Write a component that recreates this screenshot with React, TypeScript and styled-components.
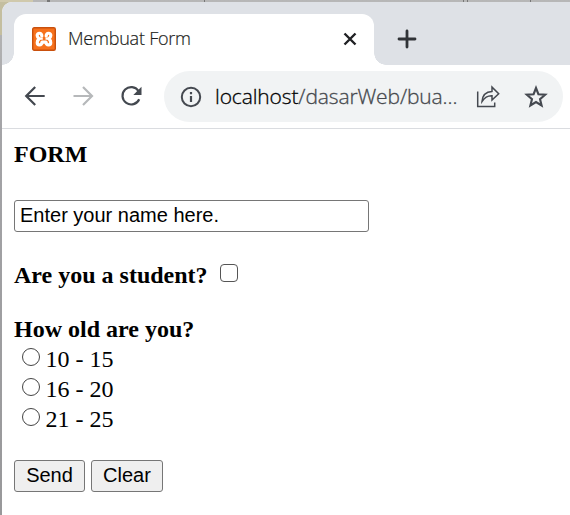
import React from "react";
import styled, { createGlobalStyle } from "styled-components";

const GlobalStyle = createGlobalStyle`
  * { box-sizing: border-box; }
  body { margin: 0; background: #fff; overflow: hidden; }
`;

const Desktop = styled.div`
  width: 570px;
  height: 515px;
  padding: 2px 0 0 2px;
  background:
    linear-gradient(#777, #777) 47px 0 / 3px 2px no-repeat,
    linear-gradient(#777, #777) 204px 0 / 1px 2px no-repeat,
    linear-gradient(#777, #777) 463px 0 / 1px 2px no-repeat,
    linear-gradient(#777, #777) 467px 0 / 1px 2px no-repeat,
    linear-gradient(#777, #777) 530px 0 / 1px 2px no-repeat,
    linear-gradient(#d0c9ac, #d0c9ac) 0 0 / 33px 2px no-repeat,
    linear-gradient(#c4be9f, #c4be9f) 0 0 / 10px 35px no-repeat,
    linear-gradient(to bottom, #b7b7b7, #a4a4a7 25%, #98989a) 0 0 / 100% 100%;
`;

const Window = styled.div`
  height: 513px;
  background: #fff;
  border-top-left-radius: 10px;
  overflow: hidden;
`;

const TabStrip = styled.div`
  height: 63px;
  display: flex;
  align-items: flex-end;
  background: #dee1e6;
`;

const TabFoot = styled.div<{ $side: "left" | "right" }>`
  width: 12px;
  height: 12px;
  background: radial-gradient(
    circle at ${(p) => (p.$side === "left" ? "0 0" : "100% 0")},
    transparent 11.5px,
    #fff 12px
  );
`;

const Tab = styled.div`
  width: 360px;
  height: 51px;
  padding: 0 17px 1px 18px;
  display: flex;
  align-items: center;
  border-radius: 12px 12px 0 0;
  background: #fff;
`;

const TabTitle = styled.span`
  margin: -2px 0 0 12px;
  flex: 1;
  font: 300 18px/24px "Open Sans", sans-serif;
  letter-spacing: -0.22px;
  -webkit-text-stroke: 0.2px #1c1d20;
  color: #1c1d20;
  white-space: nowrap;
`;

const NewTab = styled.div`
  align-self: center;
  margin: 11px 0 0 11px;
  display: flex;
`;

const Toolbar = styled.div`
  height: 64px;
  padding: 6px 7px 7px 22px;
  display: flex;
  align-items: center;
  border-bottom: 1px solid #dadce0;
`;

const NavButtons = styled.div`
  display: flex;
  gap: 24px;
  width: 140px;
`;

const AddressBar = styled.div`
  flex: 1;
  height: 51px;
  padding: 1px 15px 0 15px;
  display: flex;
  align-items: center;
  border-radius: 26px;
  background: #f1f3f4;
`;

const Address = styled.span`
  flex: 1;
  margin: -2px 0 0 12px;
  font: 300 21px/30px "Open Sans", sans-serif;
  letter-spacing: -0.12px;
  -webkit-text-stroke: 0.3px currentColor;
  color: #45484d;
  white-space: nowrap;
`;

const Host = styled.span`
  color: #000;
`;

const Actions = styled.div`
  display: flex;
  gap: 24px;
`;

const Page = styled.form`
  padding: 10px 12px 0;
  font: 24px/30px "Liberation Serif", serif;
  color: #000;
`;

const Line = styled.div<{ $bold?: boolean }>`
  height: 30px;
  display: flex;
  white-space: pre;
  font-weight: ${(p) => (p.$bold ? 700 : 400)};
`;

const NameField = styled.input`
  display: block;
  width: 355px;
  height: 32px;
  margin: 31px 0 28px;
  padding: 0 5px 2px;
  border: 1px solid #767676;
  border-radius: 3px;
  outline: none;
  font: 20px "Liberation Sans", sans-serif;
  color: #000;
`;

const Checkbox = styled.input`
  appearance: none;
  width: 18px;
  height: 18px;
  margin: 4px 0 0 12px;
  border: 1px solid #555;
  border-radius: 4px;
`;

const AgeGroup = styled.div`
  margin-top: 24px;
`;

const Radio = styled.input`
  appearance: none;
  width: 18px;
  height: 18px;
  margin: 4px 5.5px 0 8px;
  border: 1px solid #444;
  border-radius: 50%;
`;

const Buttons = styled.div`
  display: flex;
  gap: 6px;
  margin-top: 26px;
`;

const Button = styled.button<{ $width: number }>`
  width: ${(p) => p.$width}px;
  height: 32px;
  padding: 0 0 2px;
  border: 1px solid #767676;
  border-radius: 3px;
  background: #efefef;
  font: 20px "Liberation Sans", sans-serif;
  color: #000;
`;

const Favicon = () => (
  <svg width="24" height="24" viewBox="0 0 24 24">
    <rect x=".7" y=".7" width="22.6" height="22.6" rx="1.5" fill="#f6711c" stroke="#c9500d" strokeWidth="1.4" />
    <path
      d="M9.8 9C9.7 5.4 5 5.4 5.2 8.6c.1 1.5 1 2.4 2 3.2-2.7 2.2-2.5 6.1.1 6.1 2.1 0 2.7-1.4 2.7-2.8h4c0 1.4.6 2.8 2.7 2.8 2.6 0 2.8-3.9.1-6.1 1-.8 1.9-1.7 2-3.2.2-3.2-4.5-3.2-4.6.4"
      fill="none"
      stroke="#fff"
      strokeWidth="3.2"
      strokeLinejoin="round"
      strokeLinecap="round"
    />
    <path d="M8 11.7h2.8M13.5 11.7h2.8" stroke="#fff" strokeWidth="2.2" />
  </svg>
);

const CloseIcon = () => (
  <svg width="14" height="14" viewBox="0 0 14 14" fill="none" stroke="#202124" strokeWidth="2.4">
    <path d="M1.5 1.5l11 11M12.5 1.5l-11 11" />
  </svg>
);

const PlusIcon = () => (
  <svg width="20" height="20" viewBox="0 0 20 20" fill="none" stroke="#303337" strokeWidth="2.8" strokeLinecap="round">
    <path d="M10 2v16M2 10h16" />
  </svg>
);

const ArrowIcon = ({ forward = false }: { forward?: boolean }) => (
  <svg width="24" height="24" viewBox="0 0 24 24" fill="none" stroke={forward ? "#b6b8ba" : "#444950"} strokeWidth="2.2">
    <path d={forward ? "M1.5 12h18M11 3l9 9-9 9" : "M20.7 12h-18M11.2 3l-9 9 9 9"} />
  </svg>
);

const ReloadIcon = () => (
  <svg width="24" height="24" viewBox="0 0 24 24">
    <path d="M19.2 15.2A8.7 8.7 0 1 1 18.5 7" fill="none" stroke="#444950" strokeWidth="2.2" />
    <path d="M21.5 2.8V11h-8.2Z" fill="#444950" />
  </svg>
);

const InfoIcon = () => (
  <svg width="24" height="24" viewBox="0 0 24 24" fill="none" stroke="#454950" strokeWidth="2">
    <circle cx="12" cy="12" r="9.2" />
    <path d="M12 11v6M12 7v2.2" strokeWidth="2.2" />
  </svg>
);

const ShareIcon = () => (
  <svg width="24" height="24" viewBox="0 0 24 24" fill="none" stroke="#454950" strokeWidth="1.5">
    <path d="M1.7 6.5v15h17v-4" />
    <path d="M6 16.5C6.4 10.5 9.5 6.7 16 6.4V2.1l6.7 6.6-6.7 6.4v-4.3c-4.6-.2-7.4 1.7-10 5.7Z" />
  </svg>
);

const StarIcon = () => (
  <svg width="24" height="24" viewBox="0 0 24 24" fill="none" stroke="#454950" strokeWidth="2.1">
    <path d="M12 3l2.4 6.2 6.8.5-5.2 4.4 1.6 6.4L12 17l-5.6 3.5L8 14.1 2.8 9.7l6.8-.5Z" />
  </svg>
);

const ages = ["10 - 15", "16 - 20", "21 - 25"];

export default function App() {
  return (
    <Desktop>
      <GlobalStyle />
      <Window>
        <TabStrip>
          <TabFoot $side="left" />
          <Tab>
            <Favicon />
            <TabTitle>Membuat Form</TabTitle>
            <CloseIcon />
          </Tab>
          <TabFoot $side="right" />
          <NewTab>
            <PlusIcon />
          </NewTab>
        </TabStrip>
        <Toolbar>
          <NavButtons>
            <ArrowIcon />
            <ArrowIcon forward />
            <ReloadIcon />
          </NavButtons>
          <AddressBar>
            <InfoIcon />
            <Address>
              <Host>localhost</Host>/dasarWeb/bua...
            </Address>
            <Actions>
              <ShareIcon />
              <StarIcon />
            </Actions>
          </AddressBar>
        </Toolbar>
        <Page>
          <Line $bold>FORM</Line>
          <NameField type="text" defaultValue="Enter your name here." />
          <Line $bold>
            Are you a student?
            <Checkbox type="checkbox" />
          </Line>
          <AgeGroup>
            <Line $bold>How old are you?</Line>
            {ages.map((age) => (
              <Line key={age}>
                <Radio type="radio" name="age" />
                {age}
              </Line>
            ))}
          </AgeGroup>
          <Buttons>
            <Button type="button" $width={71}>Send</Button>
            <Button type="reset" $width={72}>Clear</Button>
          </Buttons>
        </Page>
      </Window>
    </Desktop>
  );
}
